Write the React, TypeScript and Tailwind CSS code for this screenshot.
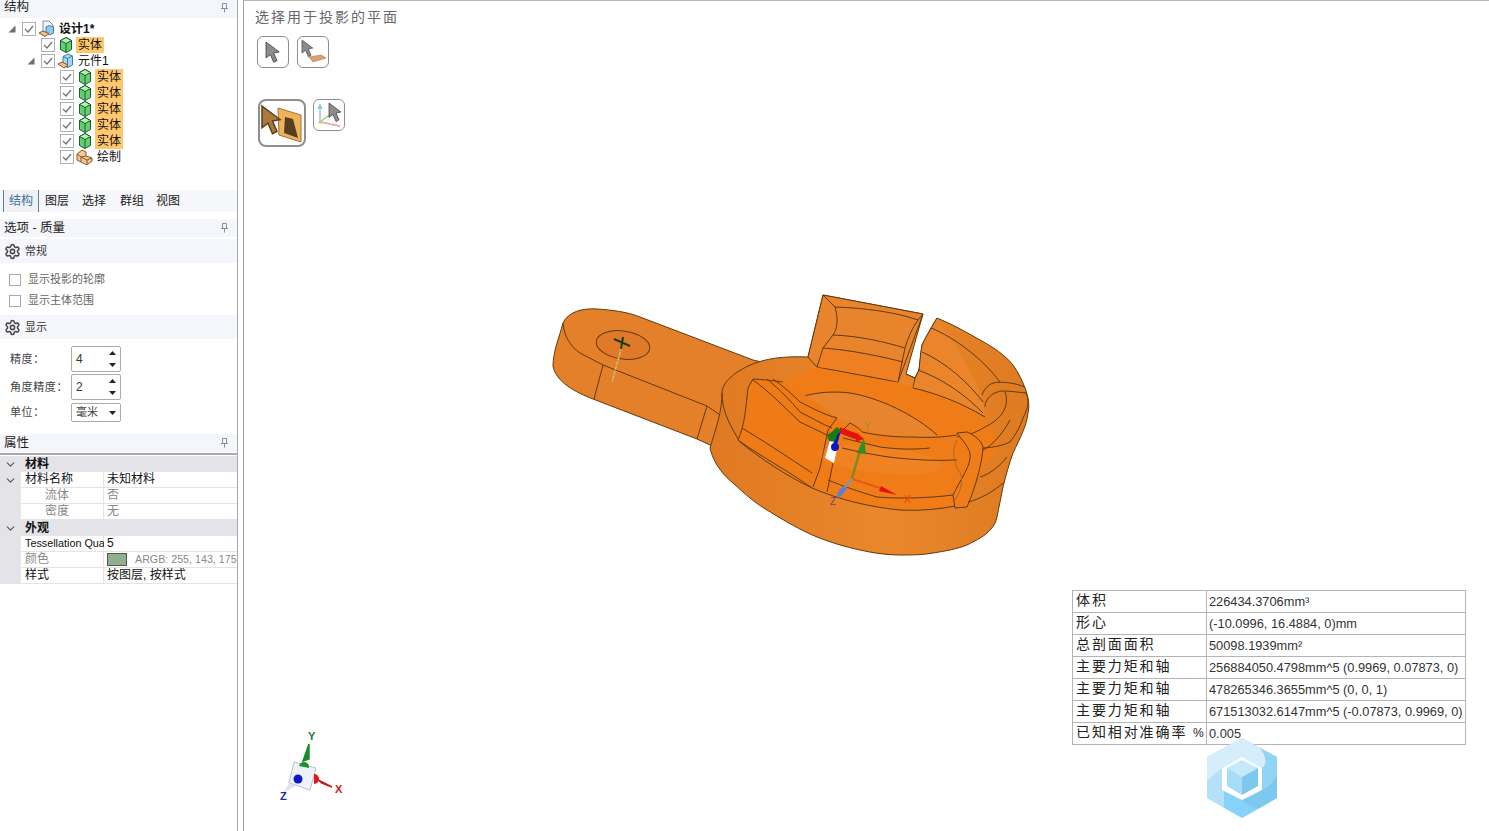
import { ChevronDown, Settings } from 'lucide-react';

const cjk = "font-['Liberation_Sans','Noto_Sans_CJK_SC',sans-serif]";

function Pin() {
  return (
    <svg width="9" height="10" viewBox="0 0 9 10" className="shrink-0">
      <path d="M2.5 .5h4v5h-4zM1 5.5h7M4.5 5.5v4" fill="none" stroke="#8a8f98" strokeWidth="1" />
    </svg>
  );
}

function PanelHeader({ title, className }: { title: string; className: string }) {
  return (
    <div className={`flex items-center justify-between bg-[#f5f6fb] pl-1 pr-2 text-[12.5px] text-[#222] ${className}`}>
      <span>{title}</span>
      <Pin />
    </div>
  );
}

function TreeCheck() {
  return (
    <svg width="14" height="14" viewBox="0 0 14 14" className="shrink-0">
      <rect x=".5" y=".5" width="13" height="13" fill="#fff" stroke="#aeb0b4" />
      <path d="M3 7l3 3 5-6" fill="none" stroke="#707070" strokeWidth="1.2" />
    </svg>
  );
}

function Cube() {
  return (
    <svg width="16" height="16" viewBox="0 0 16 16" className="shrink-0">
      <path d="M2.5 3.500l5.500-3 5.500 3v9l-5.500 3-5.500-3z" fill="#62d070" stroke="#1d5c28" />
      <path d="M2.5 3.500l5.500 3 5.500-3-5.500-3z" fill="#b4f0b0" stroke="#1d5c28" />
      <path d="M8 6.500v9" stroke="#1d5c28" />
    </svg>
  );
}

function DocIcon() {
  return (
    <svg width="17" height="18" viewBox="0 0 17 18" className="shrink-0">
      <path d="M5 1h6l4 4v8H5z" fill="#f4f8fc" stroke="#7a8aa0" />
      <path d="M8 7l3.500-1.500 4 1.500v6l-4 2-3.500-2z" fill="#8ecbea" stroke="#3f7fa8" />
      <path d="M1 13l4-2 6 2.500-4 3z" fill="#efc08a" stroke="#8a5a2a" />
    </svg>
  );
}

function PartIcon() {
  return (
    <svg width="17" height="17" viewBox="0 0 17 17" className="shrink-0">
      <path d="M6 3.500l5-2.500 4.500 2v9l-5 2.500-4.500-2z" fill="#a4d8f0" stroke="#3f7fa8" />
      <path d="M6 3.500l4.500 2 5-2.500M10.500 5.500v9" fill="none" stroke="#3f7fa8" />
      <path d="M1 11l4-2 6 3-4 3z" fill="#efc08a" stroke="#8a5a2a" />
    </svg>
  );
}

function SketchIcon() {
  return (
    <svg width="17" height="16" viewBox="0 0 17 16" className="shrink-0">
      <path d="M1 5l5-4 4 2v4l6 2v3l-5 4-10-5z" fill="#f2c79a" stroke="#8a5a2a" />
      <path d="M1 5l4 3v5M5 8l5-1M11 15v-4l5-2M5 8l6 3" fill="none" stroke="#8a5a2a" />
    </svg>
  );
}

type TreeRow = { level: number; label: string; icon: 'cube' | 'doc' | 'part' | 'sketch'; hl?: boolean; open?: boolean; bold?: boolean };

const treeRows: TreeRow[] = [
  { level: 0, label: '设计1*', icon: 'doc', open: true, bold: true },
  { level: 1, label: '实体', icon: 'cube', hl: true },
  { level: 1, label: '元件1', icon: 'part', open: true },
  { level: 2, label: '实体', icon: 'cube', hl: true },
  { level: 2, label: '实体', icon: 'cube', hl: true },
  { level: 2, label: '实体', icon: 'cube', hl: true },
  { level: 2, label: '实体', icon: 'cube', hl: true },
  { level: 2, label: '实体', icon: 'cube', hl: true },
  { level: 2, label: '绘制', icon: 'sketch' },
];

function Tree() {
  return (
    <div className="flex h-[172px] flex-col pt-[3px]">
      {treeRows.map((row, i) => (
        <div
          key={i}
          className={`flex h-4 items-center ${row.level === 0 ? 'pl-[8px]' : row.level === 1 ? 'pl-[27px]' : 'pl-[46px]'}`}
        >
          <span className="flex w-[14px] shrink-0 items-center">
            {row.open && (
              <svg width="8" height="8" viewBox="0 0 8 8">
                <path d="M7.500 .5v7h-7z" fill="#6e6e6e" />
              </svg>
            )}
          </span>
          <TreeCheck />
          <span className="ml-[2px] flex w-[17px] justify-center">
            {row.icon === 'cube' && <Cube />}
            {row.icon === 'doc' && <DocIcon />}
            {row.icon === 'part' && <PartIcon />}
            {row.icon === 'sketch' && <SketchIcon />}
          </span>
          <span
            className={`ml-[2px] h-4 px-[2px] text-[12px] leading-4 ${row.hl ? 'bg-[#ffc76c]' : ''} ${row.bold ? 'font-bold' : ''} text-[#111]`}
          >
            {row.label}
          </span>
        </div>
      ))}
    </div>
  );
}

function Tabs() {
  return (
    <div className="flex h-[22px] items-center bg-[#f5f7fb] pl-[3px] text-[12px] text-[#222]">
      <span className="flex h-[22px] w-[36px] items-center justify-center border-x border-[#5b7f9c] bg-[#eef1f6] text-[#3f6f98]">结构</span>
      <span className="ml-[6px]">图层</span>
      <span className="ml-[13px]">选择</span>
      <span className="ml-[14px]">群组</span>
      <span className="ml-[12px]">视图</span>
    </div>
  );
}

function SectionBar({ title }: { title: string }) {
  return (
    <div className="flex h-6 items-center gap-[4px] bg-[#f5f6fb] pl-1 text-[11px] text-[#333]">
      <Settings size={17} strokeWidth={2.2} className="text-[#4a4a4a]" />
      <span>{title}</span>
    </div>
  );
}

function OptionCheck({ label }: { label: string }) {
  return (
    <div className="flex h-[21px] items-center gap-[7px] pl-[9px] text-[11px] text-[#666]">
      <span className="h-3 w-3 border border-[#a8a8a8] bg-white" />
      <span>{label}</span>
    </div>
  );
}

function Spinner({ label, value, className }: { label: string; value: string; className: string }) {
  return (
    <div className={`flex items-center ${className}`}>
      <span className="w-[71px] pl-[10px] text-[11px] tracking-[.6px] text-[#444]">{label}</span>
      <div className="flex h-[26px] w-[50px] items-center justify-between rounded-[2px] border border-[#aaa] pl-1 pr-[3px] text-[12px] text-[#333]">
        <span>{value}</span>
        <svg width="9" height="20" viewBox="0 0 9 20">
          <path d="M4.500 2l3.500 4h-7zM1 14h7l-3.500 4z" fill="#222" />
        </svg>
      </div>
    </div>
  );
}

type GridRow =
  | { kind: 'section'; name: string }
  | { kind: 'row'; name: string; value: string; chevron?: boolean; muted?: boolean; indent?: boolean; swatch?: boolean; tiny?: boolean };

const gridRows: GridRow[] = [
  { kind: 'section', name: '材料' },
  { kind: 'row', name: '材料名称', value: '未知材料', chevron: true },
  { kind: 'row', name: '流体', value: '否', muted: true, indent: true },
  { kind: 'row', name: '密度', value: '无', muted: true, indent: true },
  { kind: 'section', name: '外观' },
  { kind: 'row', name: 'Tessellation Qua', value: '5', tiny: true },
  { kind: 'row', name: '颜色', value: 'ARGB: 255, 143, 175', muted: true, swatch: true },
  { kind: 'row', name: '样式', value: '按图层, 按样式' },
];

function PropertyGrid() {
  return (
    <div className="mt-px border-t-2 border-[#a9a9a9] pt-px text-[12px]">
      {gridRows.map((row, i) =>
        row.kind === 'section' ? (
          <div key={i} className="flex h-4 items-center bg-[#e3e3e8] font-bold text-[#111]">
            <span className="flex w-[21px] justify-center">
              <ChevronDown size={13} strokeWidth={2} className="text-[#555]" />
            </span>
            <span className="pl-1">{row.name}</span>
          </div>
        ) : (
          <div key={i} className="flex h-4 items-stretch bg-[#e3e3e8]">
            <span className="flex w-[21px] shrink-0 items-center justify-center">
              {row.chevron && <ChevronDown size={13} strokeWidth={2} className="text-[#555]" />}
            </span>
            <span
              className={`w-[83px] shrink-0 whitespace-nowrap border-b border-r border-[#e4e4e4] bg-white pl-1 leading-[15px] ${row.tiny ? 'text-[10.8px]' : ''} ${row.indent ? 'pl-6' : ''} ${row.muted ? 'text-[#888]' : 'text-[#111]'}`}
            >
              {row.name}
            </span>
            <span
              className={`flex min-w-0 flex-1 items-center whitespace-nowrap border-b border-[#e4e4e4] bg-white pl-[3px] leading-[15px] ${row.swatch ? 'text-[10.7px]' : ''} ${row.muted ? 'text-[#888]' : 'text-[#111]'}`}
            >
              {row.swatch && <span className="mr-2 h-[13px] w-5 shrink-0 border border-[#555] bg-[#8faf8f]" />}
              {row.value}
            </span>
          </div>
        )
      )}
    </div>
  );
}

function CursorShape({ x = 0, y = 0, fill = '#8c8c8c', scale = 1 }: { x?: number; y?: number; fill?: string; scale?: number }) {
  return (
    <g transform={`translate(${x} ${y}) scale(${scale})`}>
      <path d="M0 0l12 9-5 1 3 7-3 1.500-3-7-4 3z" fill={fill} stroke="#4a4a4a" strokeWidth=".8" />
    </g>
  );
}

function ToolButton({ large, children }: { large?: boolean; children: React.ReactNode }) {
  return (
    <div
      className={`flex items-center justify-center bg-white ${large ? 'h-12 w-12 rounded-[8px] border-2 border-[#8e8e8e]' : 'h-8 w-8 rounded-[6px] border border-[#8e8e8e]'}`}
    >
      {children}
    </div>
  );
}

const edge = { fill: 'none', stroke: '#5f3a12', strokeWidth: 1 };

function Model() {
  return (
    <svg width="500" height="280" viewBox="540 285 500 280" className="absolute left-[296px] top-[284px]">
      <defs>
        <linearGradient id="bodyShade" x1="0" x2="1" y1="0" y2="0">
          <stop offset="0" stopColor="#df7a22" />
          <stop offset=".55" stopColor="#ea862b" />
          <stop offset="1" stopColor="#de7a20" />
        </linearGradient>
      </defs>

      {/* handle */}
      <path
        d="M563 323C568 312 582 308 597 309C612 310 628 312 640 317L753 360L770 364L730 455L710 445L697 439L593 399C575 392 556 382 553 366C553 352 559 338 563 323Z"
        fill="#e5802a"
        stroke="#5f3a12"
      />
      <path d="M563 323C564 336 570 346 580 353L603 365L707 406L723 417" {...edge} />
      <path d="M603 365L594 399M707 406L697 439M723 418L715 452" {...edge} />
      <ellipse cx="623" cy="345" rx="27" ry="14" transform="rotate(8 623 345)" fill="#e07a28" stroke="#5f3a12" />

      {/* main body */}
      <path
        d="M710 448C712 456 714 460 717 465C722 473 727 478 733 483C745 494 755 503 767 510C785 521 800 530 817 537C832 543 846 547 860 550C873 553 887 555 900 555C912 555 922 555 933 553C946 551 957 549 967 545C977 540 985 536 990 530C994 526 996 522 997 517C999 507 1001 497 1003 487C1006 475 1009 464 1013 453C1020 438 1027 425 1028 413C1030 405 1028 396 1025 388C1022 380 1018 372 1013 365C1005 355 993 347 980 340C966 332 952 324 937 318L922 345L919 370L915 378L906 374L923 314L823 295L808 357C785 356 765 358 748 366C732 374 722 383 722 393C722 412 716 428 710 448Z"
        fill="url(#bodyShade)"
        stroke="#5f3a12"
      />

      {/* flange top seen inside */}
      <path
        d="M738 440C760 456 785 472 812 488C840 500 870 507 900 510C920 511 940 509 955 506L968 503L982 470L1000 445L985 420C960 400 935 395 913 388L898 382L817 367L780 385L750 385Z"
        fill="#f07c18"
      />
      <path d="M722 393C722 412 730 425 740 442C760 458 785 475 812 488C840 500 870 507 900 510C920 511 940 509 955 506" {...edge} />

      {/* inner bowl */}
      <path d="M802 397C815 392 835 391 850 393C880 398 915 415 937 435C915 440 880 436 855 426L837 418Z" fill="#e8842e" />
      <path d="M802 397C815 392 835 391 850 393C880 398 915 415 937 435" {...edge} />

      {/* back block */}
      <path d="M823 295L923 314L898 382L817 367L808 357Z" fill="#e8842c" stroke="#5f3a12" />
      <path d="M817 367L823 348C850 350 880 356 903 362L898 382C870 374 845 370 817 367Z" fill="#ef7f22" />
      <path d="M823 295L835 307C838 318 838 328 833 335L823 348L817 367" {...edge} />
      <path d="M835 307C865 308 895 312 918 320L923 314M918 320C912 328 908 338 905 348L898 382" {...edge} />
      <path d="M833 335C860 336 885 342 905 348M823 348C850 350 880 356 903 362" {...edge} />
      <path d="M906 374L915 378L913 388" {...edge} />

      {/* right block */}
      <path d="M937 318L922 345L919 370L913 388C935 393 960 402 985 417L983 402C978 380 955 345 937 318Z" fill="#ea852c" />
      <path d="M937 318C932 326 926 336 922 345C920 355 920 362 919 370L915 378" {...edge} />
      <path d="M931 328C955 338 982 358 1000 382M922 352C945 362 968 382 983 402M918 370C945 380 965 395 983 413M913 388C935 393 960 402 985 417" {...edge} />
      <path d="M982 395C985 388 988 385 993 383C1002 381 1015 383 1025 387M1025 393C1017 392 1010 391 1002 391C995 392 990 395 987 400C985 403 985 405 985 407" {...edge} />
      <path d="M1005 392C1007 398 1007 402 1005 408C1002 416 994 423 983 428C975 433 966 436 957 437" {...edge} />
      <path d="M1025 392C1028 396 1028 400 1028 402C1028 408 1025 414 1023 418C1020 428 1015 435 1010 442C1002 446 990 448 980 448" {...edge} />

      {/* front left block */}
      <path d="M748 388L753 379L767 379L778 378L783 382C800 392 822 405 837 418L827 452L814 487C790 472 760 456 738 440C744 425 746 405 748 388Z" fill="#ef7b16" />
      <path d="M748 388L753 379C770 380 782 382 783 382M753 380C770 392 785 408 800 422C812 428 826 434 832 438M767 379C780 390 790 400 800 412C812 418 822 424 832 428M773 379C783 386 792 394 800 402C812 408 825 415 837 418" {...edge} />
      <path d="M748 388C746 405 745 425 738 440C760 456 790 472 812 488M742 428C762 440 785 455 812 473" {...edge} />
      <path d="M837 418L828 430L820 468L813 487M833 463L827 492" {...edge} />

      {/* section plane */}
      <ellipse cx="880" cy="460" rx="62" ry="13" transform="rotate(6 880 460)" fill="#f59a4a" fillOpacity=".22" />

      {/* front rim curves */}
      <path d="M850 423L843 430M850 423C860 428 862 432 862 432C880 436 895 437 913 437C930 438 945 437 957 435" {...edge} />
      <path d="M843 438C855 441 868 444 880 447C895 449 912 450 930 448" {...edge} />
      <path d="M842 448C860 452 878 456 897 458C917 460 937 461 957 460" {...edge} />
      <path d="M828 480C845 487 860 492 877 497C900 499 930 498 953 495" {...edge} />

      {/* right rib */}
      <path d="M957 433L967 432C975 435 982 442 983 447C982 465 975 488 967 507L955 508L953 495C960 480 972 465 970 453C968 446 962 440 957 433Z" fill="#ef7d1a" stroke="#5f3a12" />
      <path d="M983 450C993 445 1003 433 1010 420M980 477C990 474 1000 466 1007 457M968 502C980 499 993 492 1003 483" {...edge} />
      <path d="M957 440C952 450 953 458 958 470C964 475 962 490 955 500" fill="none" stroke="#a8692c" strokeWidth="1" />

      {/* section white hole */}
      <path d="M830 440L838 444L834 463L825 458Z" fill="#fff" />

      {/* centroid triad */}
      <path d="M623 342L612 382" stroke="#c8c070" strokeWidth="1.500" strokeDasharray="4 1" />
      <path d="M614 339L630 346M623 337L621 349" stroke="#1c3c14" strokeWidth="2" />
      <path d="M839 430L858 437" stroke="#e81010" strokeWidth="6" />
      <path d="M857 433L864 439L856 442Z" fill="#e81010" />
      <path d="M839 430L835 445" stroke="#0a18c0" strokeWidth="4" />
      <circle cx="835" cy="447" r="4" fill="#0a18c0" />
      <path d="M839 429L832 436" stroke="#1a7a1a" strokeWidth="6" />
      <circle cx="832" cy="437" r="4.500" fill="#1a7a1a" />
      <path d="M852 478L862 444" stroke="#7f8a1c" strokeWidth="2.500" />
      <path d="M864 438L857 453L866 454Z" fill="#2f8f24" />
      <path d="M852 479L880 488" stroke="#e85a14" strokeWidth="2" />
      <path d="M881 486L897 495L879 491Z" fill="#e81010" />
      <path d="M852 479L841 492" stroke="#9a8c90" strokeWidth="3" />
      <path d="M846 488L838 497L841 490Z" fill="#5a7fd8" stroke="#5a7fd8" strokeWidth="3" />
      <text x="864" y="430" fontSize="10" fill="#8a9a1c" fontFamily="Liberation Sans">Y</text>
      <text x="904" y="503" fontSize="10" fill="#e8400c" fontFamily="Liberation Sans">X</text>
      <text x="830" y="505" fontSize="10" fill="#7a3f7a" fontFamily="Liberation Sans">Z</text>
    </svg>
  );
}

const tableRows = [
  ['体积', '226434.3706mm³'],
  ['形心', '(-10.0996, 16.4884, 0)mm'],
  ['总剖面面积', '50098.1939mm²'],
  ['主要力矩和轴', '256884050.4798mm^5 (0.9969, 0.07873, 0)'],
  ['主要力矩和轴', '478265346.3655mm^5 (0, 0, 1)'],
  ['主要力矩和轴', '671513032.6147mm^5 (-0.07873, 0.9969, 0)'],
];

function MassTable() {
  const nameCell = 'w-[134px] shrink-0 whitespace-nowrap border-r border-[#b4b4b4] pl-[3px] text-[14px] leading-[19px] tracking-[1.9px] text-[#222]';
  const valueCell = 'whitespace-nowrap pl-[2px] text-[12.8px] leading-[21px] text-[#333]';
  return (
    <div className="absolute left-[828px] top-[589px] w-[394px] border-l border-t border-[#b4b4b4] bg-white">
      {tableRows.map(([name, value], i) => (
        <div key={i} className="flex h-[22px] border-b border-r border-[#b4b4b4]">
          <span className={nameCell}>{name}</span>
          <span className={valueCell}>{value}</span>
        </div>
      ))}
      <div className="flex h-[22px] border-b border-r border-[#b4b4b4]">
        <span className={nameCell}>
          已知相对准确率 <span className="text-[12px] tracking-normal">%</span>
        </span>
        <span className={valueCell}>0.005</span>
      </div>
    </div>
  );
}

function Triad() {
  return (
    <svg width="75" height="75" viewBox="275 730 75 75" className="absolute left-[31px] top-[729px]">
      <path d="M303 761L309 744L309 759Z" fill="#1a8a2a" stroke="#1a8a2a" strokeWidth="1.500" />
      <path d="M294 762L316 768L310 790L289 783Z" fill="#eef2f8" stroke="#b8c0d0" />
      <path d="M299 766A5 5 0 0 1 309 768Z" fill="#16962a" />
      <path d="M314 774A5 5 0 0 1 314 784Z" fill="#e01818" />
      <circle cx="298" cy="779" r="4.500" fill="#0a18c8" />
      <path d="M289 783L283 793L296 786Z" fill="#dfe4f4" />
      <path d="M318 780L332 787L322 783Z" fill="#d01414" stroke="#d01414" strokeWidth="1.500" />
      <text x="308" y="740" fontSize="11" fontWeight="700" fill="#1a7a3a" fontFamily="Liberation Sans">Y</text>
      <text x="335" y="793" fontSize="11" fontWeight="700" fill="#c81c1c" fontFamily="Liberation Sans">X</text>
      <text x="280" y="800" fontSize="11" fontWeight="700" fill="#1c2a9a" fontFamily="Liberation Sans">Z</text>
    </svg>
  );
}

function Watermark() {
  return (
    <svg width="74" height="84" viewBox="1205 735 74 84" className="absolute left-[961px] top-[734px]">
      <path d="M1242 738L1277 757V798L1242 818L1207 798V757Z" fill="#a9dcf6" />
      <path d="M1242 738L1260 748C1266 756 1268 764 1262 768L1242 757L1222 768L1207 781V757Z" fill="#d6eefb" />
      <path d="M1262 768V790C1270 786 1275 780 1277 774V757L1260 748C1266 756 1268 764 1262 768Z" fill="#92d4f6" />
      <path d="M1277 774V798L1258 809C1250 806 1240 802 1224 790L1242 800L1262 790C1270 786 1275 780 1277 774Z" fill="#7cc8ee" />
      <path d="M1224 790L1242 800C1250 806 1255 808 1258 809L1242 818L1223 807Z" fill="#86d2f8" />
      <path d="M1207 781L1222 768V790L1224 790V807L1207 798Z" fill="#b4e0f8" />
      <path d="M1242 757L1262 768V790L1242 800L1222 790V768Z" fill="#fff" />
      <path d="M1242 760L1258 768L1242 777L1227 768Z" fill="#c6e8fb" />
      <path d="M1227 768L1242 777V795L1227 786Z" fill="#a6dcf8" />
      <path d="M1242 777L1258 768V786L1242 795Z" fill="#7cc8ee" />
    </svg>
  );
}

export default function App() {
  return (
    <div className={`flex h-[831px] w-[1489px] overflow-hidden bg-white ${cjk}`}>
      <aside className="flex w-[238px] shrink-0 flex-col border-r border-[#a8a8a8]">
        <PanelHeader title="结构" className="h-[18px] pb-[3px] leading-[15px]" />
        <Tree />
        <Tabs />
        <div className="h-[7px]" />
        <PanelHeader title="选项 - 质量" className="h-[18px]" />
        <div className="h-[2px]" />
        <SectionBar title="常规" />
        <div className="h-[6px]" />
        <OptionCheck label="显示投影的轮廓" />
        <OptionCheck label="显示主体范围" />
        <div className="h-[4px]" />
        <SectionBar title="显示" />
        <Spinner label="精度：" value="4" className="mt-[7px]" />
        <Spinner label="角度精度：" value="2" className="mt-[2px]" />
        <div className="mt-[3px] flex items-center">
          <span className="w-[71px] pl-[10px] text-[11px] tracking-[.6px] text-[#444]">单位：</span>
          <div className="flex h-[19px] w-[50px] items-center justify-between rounded-[2px] border border-[#aaa] pl-1 pr-[3px] text-[11px] text-[#444]">
            <span>毫米</span>
            <svg width="9" height="6" viewBox="0 0 9 6">
              <path d="M1 1h7l-3.500 4z" fill="#222" />
            </svg>
          </div>
        </div>
        <div className="h-3" />
        <PanelHeader title="属性" className="h-[18px]" />
        <PropertyGrid />
      </aside>

      <main className="relative ml-[5px] min-w-0 flex-1 border-l border-t border-l-[#a0a0a0] border-t-[#b8b8a4]">
        <div className="pl-[11px] pt-[7px] text-[14px] leading-[18px] tracking-[2px] text-[#666]">选择用于投影的平面</div>
        <div className="mt-[10px] flex gap-2 pl-[13px]">
          <ToolButton>
            <svg width="20" height="22" viewBox="0 0 20 22">
              <CursorShape x={3} y={1} scale={1.1} />
            </svg>
          </ToolButton>
          <ToolButton>
            <svg width="28" height="28" viewBox="0 0 28 28">
              <path d="M10 19l12-2 5 3-13 4z" fill="#dba071" stroke="#b07a4a" strokeWidth=".6" />
              <CursorShape x={3} y={2} scale={.9} />
            </svg>
          </ToolButton>
        </div>
        <div className="mt-[31px] flex items-start gap-[7px] pl-[14px]">
          <ToolButton large>
            <svg width="42" height="42" viewBox="0 0 42 42">
              <path d="M17 6l23 7v27L18 33z" fill="#eeb25c" stroke="#a8702c" />
              <path d="M24 15l8 2 5 19-14-5z" fill="#5a3d1e" />
              <g transform="translate(1 4) scale(1.5)">
                <path d="M0 0l12 9-5 1 3 7-3 1.500-3-7-4 3z" fill="#a87a3c" stroke="#5a3d1e" />
              </g>
            </svg>
          </ToolButton>
          <ToolButton>
            <svg width="28" height="28" viewBox="0 0 28 28">
              <path d="M5 21V5M3 8l2-4 2 4" fill="none" stroke="#8cbce0" strokeWidth="1.300" />
              <path d="M5 21l12-9" stroke="#8cd488" strokeWidth="1.500" />
              <path d="M5 21l20 4" stroke="#e8a0a0" strokeWidth="1.300" />
              <circle cx="5" cy="21" r="1.500" fill="#d8c848" />
              <CursorShape x={14} y={2} />
            </svg>
          </ToolButton>
        </div>
        <Model />
        <Triad />
        <MassTable />
        <Watermark />
      </main>
    </div>
  );
}
